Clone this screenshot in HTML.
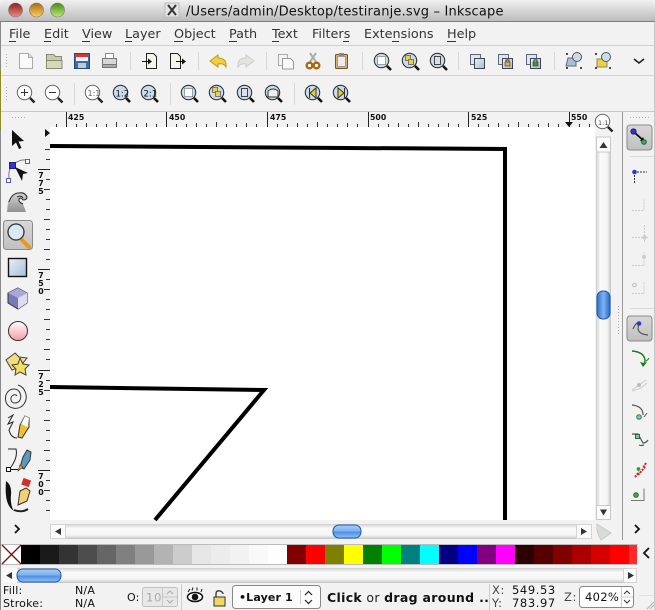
<!DOCTYPE html>
<html><head><meta charset="utf-8"><style>
html,body{margin:0;padding:0;background:#fff;overflow:hidden}
svg{display:block}
text{font-family:"DejaVu Sans","Liberation Sans",sans-serif;fill:#111}
</style></head><body>
<svg width="655" height="610" viewBox="0 0 655 610" xmlns="http://www.w3.org/2000/svg">
<defs>
<linearGradient id="tb" x1="0" y1="0" x2="0" y2="1"><stop offset="0" stop-color="#f0f0f0"/><stop offset="1" stop-color="#b9b9b9"/></linearGradient>
<linearGradient id="tr" x1="0" y1="0" x2="0" y2="1"><stop offset="0" stop-color="#cfcfcf"/><stop offset=".3" stop-color="#fbfbfb"/><stop offset=".75" stop-color="#f4f4f4"/><stop offset="1" stop-color="#c4c4c4"/></linearGradient>
<linearGradient id="trv" x1="0" y1="0" x2="1" y2="0"><stop offset="0" stop-color="#cfcfcf"/><stop offset=".3" stop-color="#fbfbfb"/><stop offset=".75" stop-color="#f4f4f4"/><stop offset="1" stop-color="#c4c4c4"/></linearGradient>
<linearGradient id="th" x1="0" y1="0" x2="0" y2="1"><stop offset="0" stop-color="#a8cdf5"/><stop offset=".45" stop-color="#7fb2ee"/><stop offset=".55" stop-color="#4f8fe4"/><stop offset="1" stop-color="#8fc4f6"/></linearGradient>
<linearGradient id="thv" x1="0" y1="0" x2="1" y2="0"><stop offset="0" stop-color="#2c6fd0"/><stop offset=".5" stop-color="#7fb4f0"/><stop offset="1" stop-color="#2468cc"/></linearGradient>
<linearGradient id="red" x1="0" y1="0" x2="0" y2="1"><stop offset="0" stop-color="#8a1f20"/><stop offset="1" stop-color="#f08a80"/></linearGradient>
<linearGradient id="yel" x1="0" y1="0" x2="0" y2="1"><stop offset="0" stop-color="#a86a10"/><stop offset="1" stop-color="#fbd060"/></linearGradient>
<linearGradient id="grn" x1="0" y1="0" x2="0" y2="1"><stop offset="0" stop-color="#4a8a1a"/><stop offset="1" stop-color="#b8ec70"/></linearGradient>
<linearGradient id="sq" x1="0" y1="0" x2="1" y2="1"><stop offset="0" stop-color="#e8f0f6"/><stop offset="1" stop-color="#a4bfd8"/></linearGradient>
<linearGradient id="pk" x1="0" y1="0" x2="0" y2="1"><stop offset="0" stop-color="#fff"/><stop offset="1" stop-color="#f59aa8"/></linearGradient>
<linearGradient id="gy" x1="0" y1="0" x2="0" y2="1"><stop offset="0" stop-color="#d8d8d8"/><stop offset="1" stop-color="#8f8f8f"/></linearGradient>
<linearGradient id="btn" x1="0" y1="0" x2="0" y2="1"><stop offset="0" stop-color="#d8d8d8"/><stop offset="1" stop-color="#c0c0c0"/></linearGradient>
<symbol id="mag" overflow="visible"><path d="M5 5L9.500 9.500" stroke="#222" stroke-width="2.400"/><circle cx="-.5" cy="-.5" r="7.200" fill="#fff" stroke="#666" stroke-width="1"/></symbol>
<symbol id="magb" overflow="visible"><path d="M5 5L9 9" stroke="#111" stroke-width="2.600"/><circle cx="-.5" cy="-.5" r="7.200" fill="#c9dcee" stroke="#333" stroke-width="1.100"/></symbol>
<pattern id="dots" width="3" height="3" patternUnits="userSpaceOnUse"><rect width="1" height="1" fill="#b0b0b0"/></pattern>
</defs>

<rect width="655" height="610" fill="#f2f2f2"/>
<!-- title -->
<path d="M0 22V6Q0 0 8 0H647Q655 0 655 6V22Z" fill="url(#tb)"/>
<rect y="21" width="655" height="1" fill="#7f7f7f"/>
<circle cx="15.500" cy="10" r="7" fill="url(#red)" stroke="#777" stroke-width=".6"/>
<circle cx="36.500" cy="10" r="7" fill="url(#yel)" stroke="#777" stroke-width=".6"/>
<circle cx="57.500" cy="10" r="7" fill="url(#grn)" stroke="#777" stroke-width=".6"/>
<rect x="165" y="3" width="14" height="14" fill="#e4e4e4" stroke="#bbb"/>
<path d="M168 5L176 15M176 5L168 15" stroke="#333" stroke-width="2"/>
<text x="186" y="15.500" font-size="13" letter-spacing=".18">/Users/admin/Desktop/testiranje.svg – Inkscape</text>

<!-- menu -->
<rect y="22" width="655" height="24" fill="#f2f2f2"/>
<g font-size="12.800">
<text x="9" y="38" style="fill:#333">File</text><text x="44" y="38" style="fill:#333">Edit</text><text x="82" y="38" style="fill:#333">View</text><text x="125" y="38" style="fill:#333">Layer</text><text x="174" y="38" style="fill:#333">Object</text><text x="229" y="38" style="fill:#333">Path</text><text x="272" y="38" style="fill:#333">Text</text><text x="312" y="38" style="fill:#333">Filters</text><text x="364" y="38" style="fill:#333">Extensions</text><text x="447" y="38" style="fill:#333">Help</text>
</g>
<g stroke="#333" stroke-width="1"><path d="M9 41.500h7M44 41.500h7M82 41.500h8M125 41.500h7M174 41.500h9M229 41.500h8M272 41.500h7M343 41.500h6M392 41.500h7M447 41.500h9"/></g>
<rect y="45" width="655" height="1" fill="#d0d0d0"/>
<rect y="75" width="655" height="1" fill="#d2d2d2"/>
<rect y="111" width="655" height="1" fill="#c8c8c8"/>
<rect x="4" y="54" width="4" height="15" fill="url(#dots)"/>
<rect x="4" y="86" width="4" height="15" fill="url(#dots)"/>
<g fill="#d8d8d8"><rect x="130" y="52" width="1" height="18"/><rect x="198" y="52" width="1" height="18"/><rect x="266" y="52" width="1" height="18"/><rect x="362" y="52" width="1" height="18"/><rect x="458" y="52" width="1" height="18"/><rect x="554" y="52" width="1" height="18"/><rect x="74" y="83" width="1" height="22"/><rect x="170" y="83" width="1" height="22"/><rect x="294" y="83" width="1" height="22"/></g>

<!-- toolbar1 -->
<path d="M19.500 53.500h9l4 4v11h-13z" fill="#fafafa" stroke="#aaa"/><path d="M28.500 53.500v4h4" fill="#ddd" stroke="#aaa"/>
<path d="M46.500 54.500h7l2 2h6v4h-15z" fill="#c8ccaa" stroke="#888a70"/><path d="M46.500 68.500v-8h15.500v8z" fill="#d6d9b8" stroke="#888a70"/>
<rect x="74.500" y="53.500" width="15" height="15" fill="#3a6ea5" stroke="#234a78"/><rect x="76" y="54" width="12" height="3" fill="#e03030"/><rect x="76" y="57" width="12" height="4" fill="#f0f0f0"/><rect x="78" y="63" width="8" height="5" fill="#c0c8d0"/>
<path d="M105.500 53.500h8v5h-8z" fill="#fff" stroke="#888"/><rect x="102.500" y="58.500" width="14" height="6" fill="#d8d8d8" stroke="#777"/><rect x="102.500" y="64.500" width="14" height="3" fill="#aaa" stroke="#777"/>
<path d="M146.500 53.500h7l3 3v12h-10z" fill="#f4f4ec" stroke="#222"/><path d="M142 61.500h8" stroke="#111"/><path d="M148 58.500l4 3-4 3z" fill="#111"/>
<path d="M170.500 53.500h7l3 3v12h-10z" fill="#f4f4ec" stroke="#222"/><path d="M176 61.500h8" stroke="#111"/><path d="M182 58.500l4 3-4 3z" fill="#111"/>
<path d="M226 67q1-9-8-9v-3l-8 6 8 6v-3q6-1 8 3z" fill="#f0d040" stroke="#b89818"/>
<path d="M238 67q-1-9 8-9v-3l8 6-8 6v-3q-6-1-8 3z" fill="#e2e4e0" stroke="#ccc"/>
<rect x="278.500" y="54.500" width="9" height="11" fill="#f4f4f4" stroke="#aaa"/><path d="M282.500 58.500h8l3 3v7.500h-11z" fill="#f8f8f8" stroke="#999"/>
<path d="M310 53l6 9M316 53l-6 9" stroke="#aaa" stroke-width="2"/><circle cx="309.500" cy="65.500" r="2.800" fill="#fff" stroke="#a86a10" stroke-width="2.400"/><circle cx="316.500" cy="65.500" r="2.800" fill="#fff" stroke="#a86a10" stroke-width="2.400"/>
<rect x="335.500" y="54.500" width="12" height="14" rx="1" fill="#d8b070" stroke="#80501a"/><rect x="337.500" y="56.500" width="8" height="10" fill="#ececec" stroke="#999"/><rect x="339" y="53" width="5" height="3" fill="#888"/>
<use href="#magb" x="382" y="61"/><rect x="377.500" y="56.500" width="8" height="8" fill="#fff" stroke="#555" stroke-dasharray="1 1"/>
<use href="#magb" x="410" y="61"/><rect x="405.500" y="55.500" width="5" height="5" fill="#f0d040" stroke="#777"/><rect x="408.500" y="59.500" width="5" height="5" fill="#f0d040" stroke="#777"/>
<use href="#magb" x="438" y="61"/><rect x="434.500" y="56.500" width="6" height="8" fill="#dde" stroke="#444"/>
<rect x="470.500" y="54.500" width="10" height="10" fill="#dbe6f0" stroke="#5a6a7a"/><rect x="474.500" y="58.500" width="10" height="10" fill="url(#sq)" stroke="#445"/>
<rect x="498.500" y="54.500" width="10" height="10" fill="#dbe6f0" stroke="#5a6a7a"/><rect x="502.500" y="58.500" width="10" height="10" fill="url(#sq)" stroke="#445"/><rect x="505" y="62" width="5" height="4" fill="#f0b020" stroke="#333" stroke-width=".6"/><path d="M506 62v-2h3v2" fill="none" stroke="#333"/>
<rect x="526.500" y="54.500" width="10" height="10" fill="#dbe6f0" stroke="#5a6a7a"/><rect x="530.500" y="58.500" width="10" height="10" fill="url(#sq)" stroke="#445"/><rect x="533" y="62" width="5" height="4" fill="#3a9a30" stroke="#333" stroke-width=".6"/><path d="M534 62v-2h3v2" fill="none" stroke="#333"/>
<path d="M568 58h8v8h-10z" fill="#a8c0d8" stroke="#667"/><circle cx="577" cy="57" r="4.500" fill="#c9dcee" stroke="#555"/><path d="M566 54h2M566 68h2M580 68h2" stroke="#111" stroke-width="1.500"/>
<path d="M597 59h10v8h-10z" fill="#f0d040" stroke="#886"/><circle cx="606" cy="57" r="4.500" fill="#c9dcee" stroke="#555"/><path d="M595 54h2M595 68h2M609 68h2" stroke="#111" stroke-width="1.500"/>
<path d="M634 59l5 4 5-4" fill="none" stroke="#222" stroke-width="1.600"/>

<!-- toolbar2 -->
<use href="#mag" x="25" y="93"/><path d="M21 92.500h7M24.500 89v7" stroke="#333"/>
<use href="#mag" x="53" y="93"/><path d="M49 92.500h7" stroke="#333"/>
<use href="#mag" x="93" y="93"/><text x="87.500" y="96" font-size="8" style="fill:#666">1:1</text>
<use href="#magb" x="121" y="93"/><text x="115.500" y="96.500" font-size="8.500" style="fill:#111">1:2</text>
<use href="#magb" x="149" y="93"/><text x="143.500" y="96.500" font-size="8.500" style="fill:#111">2:1</text>
<use href="#magb" x="189" y="93"/><rect x="184.500" y="88.500" width="8" height="8" fill="#fff" stroke="#555" stroke-dasharray="1 1"/>
<use href="#magb" x="217" y="93"/><rect x="212.500" y="87.500" width="5" height="5" fill="#f0d040" stroke="#777"/><rect x="215.500" y="91.500" width="5" height="5" fill="#f0d040" stroke="#777"/>
<use href="#magb" x="245" y="93"/><rect x="241.500" y="88.500" width="6" height="8" fill="#dde" stroke="#444"/>
<use href="#magb" x="273" y="93"/><path d="M268 91q5-4 10 0v6h-10z" fill="#eee" stroke="#333"/>
<use href="#magb" x="313" y="93"/><path d="M316 88v10l-6-5z" fill="#f0d020" stroke="#333"/><path d="M309.500 88v10" stroke="#333"/>
<use href="#magb" x="341" y="93"/><path d="M338 88v10l6-5z" fill="#f0d020" stroke="#333"/><path d="M344.500 88v10" stroke="#333"/>

<!-- rulers -->
<rect x="10" y="115" width="17" height="4" fill="url(#dots)"/>
<path d="M66.500 112v15M166.500 112v15M267.500 112v15M368.500 112v15M468.500 112v15M569.500 112v15" stroke="#222"/>
<g font-size="7.800" style="font-weight:bold"><text x="68" y="120">425</text><text x="169" y="120">450</text><text x="270" y="120">475</text><text x="370" y="120">500</text><text x="471" y="120">525</text><text x="571" y="120">550</text></g>
<path d="M56.500 127v-3M76.500 127v-3M86.500 127v-4M96.500 127v-3M106.500 127v-3M116.500 127v-5M126.500 127v-3M136.500 127v-3M146.500 127v-4M156.500 127v-3M176.500 127v-3M186.500 127v-3M196.500 127v-4M206.500 127v-3M216.500 127v-5M226.500 127v-3M236.500 127v-3M246.500 127v-4M256.500 127v-3M277.500 127v-3M287.500 127v-3M297.500 127v-4M307.500 127v-3M317.500 127v-5M327.500 127v-3M337.500 127v-3M347.500 127v-4M357.500 127v-3M378.500 127v-3M388.500 127v-3M398.500 127v-4M408.500 127v-3M418.500 127v-5M428.500 127v-3M438.500 127v-3M448.500 127v-4M458.500 127v-3M478.500 127v-3M488.500 127v-3M498.500 127v-4M508.500 127v-3M518.500 127v-5M528.500 127v-3M538.500 127v-3M548.500 127v-4M558.500 127v-3M579.500 127v-3M589.500 127v-3" stroke="#333"/>
<path d="M565 122h8l-4 5z" fill="#111"/>
<path d="M45 129l5 4-5 4z" fill="#111"/>
<path d="M38 169.500h12M38 269.500h12M38 370.500h12M38 470.500h12" stroke="#222"/>
<path d="M45 149.500h5M46 159.500h4M46 179.500h4M44 189.500h6M46 199.500h4M46 209.500h4M44 219.500h6M46 229.500h4M46 239.500h4M44 249.500h6M46 259.500h4M46 279.500h4M44 289.500h6M46 299.500h4M46 309.500h4M44 319.500h6M46 329.500h4M46 339.500h4M44 349.500h6M46 359.500h4M46 380.500h4M44 390.500h6M46 400.500h4M46 410.500h4M44 420.500h6M46 430.500h4M46 440.500h4M44 450.500h6M46 460.500h4M46 480.500h4M44 490.500h6M46 500.500h4M46 510.500h4" stroke="#333"/>
<g font-size="7.800" text-anchor="middle" style="font-weight:bold"><text x="41" y="178">7</text><text x="41" y="186">7</text><text x="41" y="194">5</text><text x="41" y="278">7</text><text x="41" y="286">5</text><text x="41" y="294">0</text><text x="41" y="379">7</text><text x="41" y="387">2</text><text x="41" y="395">5</text><text x="41" y="479">7</text><text x="41" y="487">0</text><text x="41" y="495">0</text></g>

<!-- canvas -->
<rect x="50" y="127" width="545" height="393" fill="#fff"/>
<polyline points="50,146 505,149 505,520" fill="none" stroke="#000" stroke-width="4"/>
<polyline points="50,387 264,390 155,520" fill="none" stroke="#000" stroke-width="4"/>

<!-- zoom corner -->
<use href="#mag" x="603" y="122"/><text x="598" y="125" font-size="6.500" style="fill:#444">1:1</text>

<!-- v scrollbar -->
<rect x="596" y="137" width="15" height="383" fill="#f4f4f4"/>
<rect x="596" y="137" width="15" height="383" rx="7" fill="url(#trv)"/>
<rect x="596.500" y="137" width="14" height="15" fill="#fbfbfb" stroke="#c8c8c8"/>
<path d="M599.500 148l4-6 4 6z" fill="#333"/>
<rect x="596.500" y="505.500" width="14" height="14" fill="#fbfbfb" stroke="#c8c8c8"/>
<path d="M600 509.500h7l-3.500 6z" fill="#333"/>
<rect x="597" y="291" width="13" height="28" rx="6" fill="url(#thv)" stroke="#1f56a8"/>
<rect x="616" y="305" width="3" height="30" fill="url(#dots)"/>
<rect x="622" y="112" width="1" height="428" fill="#9a9a9a"/>

<!-- left tools -->
<path d="M12 130l0 16 4-3.500 3 6.500 2.500-1-3-6.500 5.500-.5z" fill="#111"/>
<path d="M14 164q6-5 12-4M12 165q-4 6-3 13" fill="none" stroke="#777"/>
<rect x="9.500" y="162.500" width="6" height="6" fill="#3333dd" stroke="#226"/><rect x="25.500" y="159.500" width="4" height="4" fill="#fff" stroke="#55c"/><rect x="6.500" y="178.500" width="4" height="4" fill="#fff" stroke="#55c"/>
<path d="M15 167l13 6-5 1-1 7z" fill="#111"/>
<path d="M7 212l1-10q4-10 11-10q6-1 8 4q0 4-4 4q-2-3-4-1q-1 3 4 5l3 8z" fill="url(#gy)"/>
<path d="M9 202q3-9 10-9q6-1 8 4q0 3-4 3q-2-3-4-1q-1 3 4 5" fill="none" stroke="#333" stroke-width="1.100"/>
<path d="M17 197q4-2 6 1" fill="none" stroke="#333"/>
<rect x="3.500" y="220.500" width="29" height="29" rx="3" fill="url(#btn)" stroke="#8a8a8a"/>
<path d="M21 239l8 8" stroke="#e89820" stroke-width="4" stroke-linecap="round"/>
<circle cx="16" cy="232" r="8" fill="#d8e8f4" stroke="#333" stroke-width="1.300"/>
<rect x="8.500" y="258.500" width="18" height="18" fill="url(#sq)" stroke="#111" stroke-width="1.400"/>
<path d="M18 288l9 5v10l-9 6-10-6v-10z" fill="#7a78b8" stroke="#333"/><path d="M18 298l9-5v10l-9 6z" fill="#dcdcf0"/><path d="M18 298l-10-5 10-5 9 5z" fill="#aaa8d8"/>
<ellipse cx="18" cy="331" rx="9.500" ry="9.500" fill="url(#pk)" stroke="#333"/>
<path d="M15 353l4 4 8 1-4 5 2 7-7-2-6 2-6-10z" fill="#f4dc80" stroke="#444"/><path d="M20 358l3 6 6 1-4 4 1 6-6-3-5 3 1-6-4-4 6-1z" fill="#f4e060" stroke="#444"/>
<path d="M17 396c-2-3-7 0-6 4s7 4 9 0 0-11-6-11-10 6-8 13 13 9 18 2 1-17-6-19" fill="none" stroke="#333" stroke-width="1"/>
<path d="M8 418l5-3-5 9 5-2-4 8q2 8 8 8" fill="none" stroke="#222" stroke-width="1"/>
<path d="M18 437l2-12 5-9 4 2 0 9-7 11z" fill="#f0c030" stroke="#333"/><path d="M21 424l4-8 4 2-1 9z" fill="#fff"/>
<path d="M8 449h8q2 8-5 18" fill="none" stroke="#222"/><rect x="6.500" y="467.500" width="4" height="4" fill="#fff" stroke="#111"/><path d="M11 469.500h7" stroke="#111"/>
<path d="M20 467l3-10 4-7 4 2-1 8-6 9z" fill="#5a9ac0" stroke="#333"/><path d="M18 471l2-6 3 2z" fill="#f0b020" stroke="#333" stroke-width=".6"/>
<path d="M6 481q6 4 5 14t3 16q-5-3-7-10t-1-20z" fill="#111"/>
<path d="M18 505l2-14 6-3 4 3-3 10z" fill="#f4d070" stroke="#333"/><rect x="22" y="479" width="8" height="7" fill="#d03030" transform="rotate(20 26 483)"/>
<path d="M14 510q8 3 14-1" stroke="#222" stroke-width="2" fill="none"/>
<path d="M15 525l4 4-4 4" fill="none" stroke="#111" stroke-width="1.700"/>

<!-- right toolbar -->
<rect x="629" y="115" width="20" height="4" fill="url(#dots)"/>
<rect x="627" y="125" width="25" height="25" rx="3" fill="url(#btn)" stroke="#8a8a8a"/>
<path d="M634 132l10 9" stroke="#111" stroke-width="1.800"/><path d="M645 142l-5-1 3-4z" fill="#111"/>
<circle cx="633.500" cy="131.500" r="2.600" fill="#33d" stroke="#226"/><circle cx="644" cy="142" r="2.300" fill="#4a4" stroke="#164"/>
<rect x="630" y="156" width="24" height="1" fill="#dadada"/>
<path d="M637 172h10M634.500 175v9" stroke="#333" stroke-dasharray="2 1"/><circle cx="634.500" cy="172" r="2.300" fill="#33d"/>
<path d="M632 210.500h12v-12" fill="none" stroke="#ccc" stroke-dasharray="2 1"/>
<path d="M632 237.500h16M644.500 225v18" stroke="#ccc" stroke-dasharray="2 1"/><circle cx="644.500" cy="237.500" r="2.200" fill="#ccc"/>
<path d="M632 265.500h12v-13" fill="none" stroke="#ccc" stroke-dasharray="2 1"/><circle cx="644" cy="257" r="2" fill="#ccc"/>
<path d="M632 293.500h12v-12" fill="none" stroke="#ccc" stroke-dasharray="2 1"/><circle cx="634.500" cy="285" r="1.800" fill="none" stroke="#bbb"/>
<rect x="630" y="308" width="24" height="1" fill="#dadada"/>
<rect x="627" y="316" width="25" height="25" rx="3" fill="url(#btn)" stroke="#8a8a8a"/>
<path d="M633 329q3-7 6-6M639 324q-4 10 9 11" fill="none" stroke="#555" stroke-width="1.200"/><circle cx="639" cy="323.500" r="2.300" fill="#33d"/>
<path d="M632 351q12 1 13 9q0 4-2 6" fill="none" stroke="#1a7a1a" stroke-width="1.400"/><path d="M640 362l3 5 4-5-3 1z" fill="#1a7a1a"/><path d="M646 361q2-1 3-3" fill="none" stroke="#1a7a1a"/>
<path d="M632 390l14-10M632 391l9-3 6-5" stroke="#ccc" fill="none"/><circle cx="639" cy="385" r="2" fill="#bbb"/>
<path d="M632 405q11 1 11 10" fill="none" stroke="#555" stroke-width="1.200"/><path d="M644 417l3-4" stroke="#555"/><circle cx="639" cy="417" r="2.300" fill="#8bc" stroke="#2a8a2a"/>
<path d="M632 434h6l5 9q3 0 5-3M639 445q2 1 5 0" fill="none" stroke="#555" stroke-width="1.200"/><rect x="635.500" y="434.500" width="4" height="4" fill="#8bc" stroke="#1a7a1a"/>
<path d="M635 477l4-5M646 463l-3 5M638 475l7-8" stroke="#c22" stroke-width="2" stroke-dasharray="2 1"/><circle cx="638.500" cy="469" r="1.900" fill="#393"/>
<circle cx="636" cy="495" r="2.300" fill="#4a4" stroke="#264"/><path d="M631 500.500h13v-12" fill="none" stroke="#777"/>
<path d="M635 525l4 4-4 4" fill="none" stroke="#111" stroke-width="1.800"/>

<!-- h scrollbar -->
<rect x="50" y="524" width="542" height="15" fill="url(#tr)"/>
<rect x="50.500" y="524.500" width="15" height="14" fill="#fbfbfb" stroke="#d4d4d4"/>
<path d="M61 528v7l-6-3.500z" fill="#333"/>
<rect x="576.500" y="524.500" width="15" height="14" fill="#fbfbfb" stroke="#d4d4d4"/>
<path d="M581 528v7l6-3.500z" fill="#333"/>
<rect x="333" y="525" width="28" height="13" rx="6" fill="url(#th)" stroke="#1f56a8"/>
<path d="M597 524l14 9-10 7q-5-8-4-16z" fill="#d6dcd6" stroke="#c8ccc8"/>

<!-- palette -->
<rect x="0" y="544" width="638" height="1" fill="#bbb"/><rect x="0" y="564" width="638" height="1" fill="#bbb"/>
<rect x="2" y="545" width="19" height="19" fill="#fff"/><path d="M2 545l19 19M21 545l-19 19" stroke="#7a1414" stroke-width="1.400"/>
<rect x="21" y="545" width="19" height="19" fill="#000"/><rect x="40" y="545" width="19" height="19" fill="#1a1a1a"/><rect x="59" y="545" width="19" height="19" fill="#333"/><rect x="78" y="545" width="19" height="19" fill="#4d4d4d"/><rect x="97" y="545" width="19" height="19" fill="#666"/><rect x="116" y="545" width="19" height="19" fill="#808080"/><rect x="135" y="545" width="19" height="19" fill="#999"/><rect x="154" y="545" width="19" height="19" fill="#b3b3b3"/><rect x="173" y="545" width="19" height="19" fill="#ccc"/><rect x="192" y="545" width="19" height="19" fill="#e6e6e6"/><rect x="211" y="545" width="19" height="19" fill="#ececec"/><rect x="230" y="545" width="19" height="19" fill="#f2f2f2"/><rect x="249" y="545" width="19" height="19" fill="#f9f9f9"/><rect x="268" y="545" width="19" height="19" fill="#fff"/><rect x="287" y="545" width="19" height="19" fill="#800000"/><rect x="306" y="545" width="19" height="19" fill="#f00"/><rect x="325" y="545" width="19" height="19" fill="#808000"/><rect x="344" y="545" width="19" height="19" fill="#ff0"/><rect x="363" y="545" width="19" height="19" fill="#008000"/><rect x="382" y="545" width="19" height="19" fill="#0f0"/><rect x="401" y="545" width="19" height="19" fill="#008080"/><rect x="420" y="545" width="19" height="19" fill="#0ff"/><rect x="439" y="545" width="19" height="19" fill="#000080"/><rect x="458" y="545" width="19" height="19" fill="#00f"/><rect x="477" y="545" width="19" height="19" fill="#800080"/><rect x="496" y="545" width="19" height="19" fill="#f0f"/><rect x="515" y="545" width="19" height="19" fill="#2b0000"/><rect x="534" y="545" width="19" height="19" fill="#500"/><rect x="553" y="545" width="19" height="19" fill="#800000"/><rect x="572" y="545" width="19" height="19" fill="#a00"/><rect x="591" y="545" width="19" height="19" fill="#d40000"/><rect x="610" y="545" width="19" height="19" fill="#f00"/><rect x="629" y="545" width="8" height="19" fill="#ff2a2a"/>
<path d="M649 548l-5 5 5 5" fill="none" stroke="#111" stroke-width="1.800"/>

<!-- palette scrollbar -->
<rect x="2" y="568" width="635" height="15" fill="url(#tr)"/>
<rect x="2" y="568" width="15" height="15" fill="#f8f8f8"/>
<path d="M12 572v7l-6-3.500z" fill="#333"/>
<rect x="623.500" y="568.500" width="13" height="14" fill="#fbfbfb" stroke="#d4d4d4"/>
<path d="M628 572v7l6-3.500z" fill="#333"/>
<rect x="17" y="569" width="44" height="13" rx="6" fill="url(#th)" stroke="#1f56a8"/>

<!-- status -->
<g font-size="11" letter-spacing=".2"><text x="3" y="594">Fill:</text><text x="3" y="607">Stroke:</text><text x="75" y="594">N/A</text><text x="75" y="607">N/A</text><text x="127" y="601">O:</text></g>
<rect x="142.500" y="587.500" width="35" height="19" rx="2" fill="#e8e8e8" stroke="#c0c0c0"/>
<text x="146" y="601.500" font-size="11.500" style="fill:#aaa" letter-spacing=".8">100</text>
<rect x="162" y="588" width="15" height="18" fill="#e8e8e8"/><path d="M162.500 588v18M163 597h14" stroke="#c8c8c8"/>
<path d="M167 594l3-3 3 3M167 600l3 3 3-3" fill="none" stroke="#aaa"/>
<rect x="181" y="584" width="1" height="26" fill="#ccc"/>
<ellipse cx="195" cy="597" rx="7.500" ry="4.500" fill="#fff" stroke="#111" stroke-width="1.500"/><circle cx="195" cy="597" r="3.300" fill="#111"/><path d="M188 592l2-3M192 590.500l1-3M197 590.500l0-3M201 592l1-3" stroke="#111"/>
<rect x="214" y="597" width="11" height="9" fill="#f0d860" stroke="#333"/><path d="M216 597v-3q0-4 4-3 3 1 3 3" fill="none" stroke="#333" stroke-width="1.300"/>
<rect x="232.500" y="585.500" width="88" height="23" rx="3" fill="#fbfbfb" stroke="#888"/>
<text x="239" y="601" font-size="11" letter-spacing=".15" style="font-weight:bold;fill:#111">•Layer 1</text>
<path d="M300.500 590v14" stroke="#ccc"/><path d="M305 595l3.500-3.500 3.500 3.500M305 600l3.500 3.500 3.500-3.500" fill="none" stroke="#222" stroke-width="1.200"/>
<text x="327" y="602" font-size="12.500" letter-spacing=".32" style="fill:#222"><tspan style="font-weight:bold;fill:#111">Click</tspan> or <tspan style="font-weight:bold;fill:#111">drag around ..</tspan></text>
<rect x="489" y="584" width="1" height="26" fill="#ccc"/>
<g font-size="11.500" letter-spacing=".6"><text x="492" y="594" style="fill:#444">X:</text><text x="492" y="607" style="fill:#444">Y:</text><text x="512" y="594">549.53</text><text x="512" y="607">783.97</text><text x="564" y="601" style="fill:#444">Z:</text></g>
<rect x="579.500" y="586.500" width="54" height="21" rx="3" fill="#fff" stroke="#888"/>
<text x="585" y="601" font-size="11.500" letter-spacing=".3">402%</text>
<path d="M621.500 587v20M622 597h11" stroke="#ccc"/><path d="M624 594l3-3 3 3M624 600l3 3 3-3" fill="none" stroke="#333"/>
<path d="M647 609l7-7M650 609l4-4" stroke="#b0b0b0"/>
<rect x="639" y="595" width="16" height="1" fill="#e0e0e0"/>

<!-- window edges -->
<rect x="0" y="22" width="1" height="588" fill="#8a8a8a"/>
<rect x="654" y="22" width="1" height="588" fill="#c8c8c8"/>
<rect x="0" y="70" width="1" height="60" fill="#8c8c20"/>
</svg>
</body></html>
